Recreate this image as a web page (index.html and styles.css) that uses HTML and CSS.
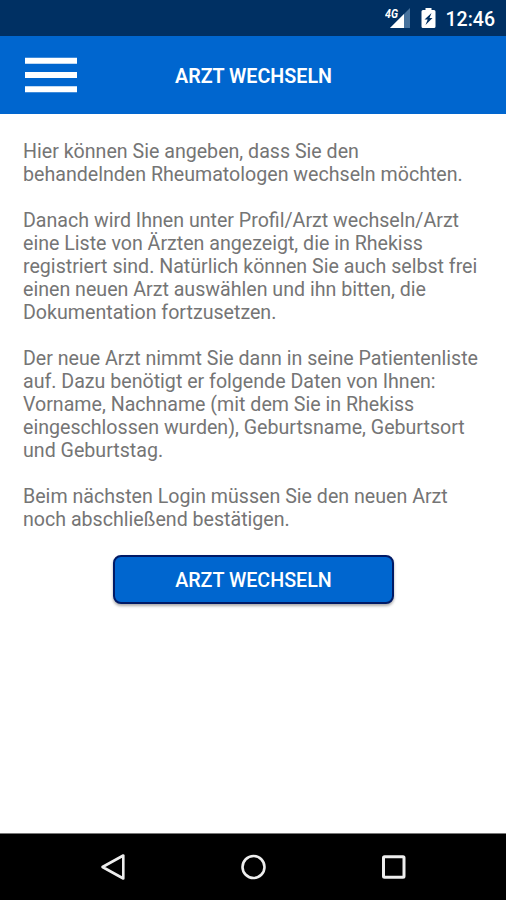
FILE: index.html
```html
<!DOCTYPE html>
<html lang="de">
<head>
<meta charset="utf-8">
<title>Arzt wechseln</title>
<link rel="stylesheet" href="styles.css">
</head>
<body>
<div class="status">
<svg class="signal" width="26" height="24" viewBox="0 0 26 24"><path d="M25 2V22H5z" fill="#47729d"/><path d="M19 8V22H5z" fill="#fff"/><text x="0" y="11.500" class="net" textLength="13" lengthAdjust="spacingAndGlyphs">4G</text></svg>
<svg class="battery" width="15" height="22" viewBox="0 0 15 22"><path d="M4.500 1h6v2h2.500q1.500 0 1.500 1.500v15q0 1.500-1.500 1.500H2q-1.500 0-1.500-1.500v-15Q.5 3 2 3h2.500z" fill="#fff"/><path d="M10.500 6L3.500 12.500h3.200L4.500 18L11.500 11H8.500z" fill="#003063"/></svg>
<span class="clock">12:46</span>
</div>
<header class="bar">
<svg class="menu" width="52" height="36" viewBox="0 0 52 36"><path d="M0 3.700H52M0 18H52M0 32.200H52" stroke="#fff" stroke-width="6"/></svg>
<h1>ARZT WECHSELN</h1>
</header>
<main>
<p>Hier können Sie angeben, dass Sie den<br>behandelnden Rheumatologen wechseln möchten.</p>
<p>Danach wird Ihnen unter Profil/Arzt wechseln/Arzt<br>eine Liste von Ärzten angezeigt, die in Rhekiss<br>registriert sind. Natürlich können Sie auch selbst frei<br>einen neuen Arzt auswählen und ihn bitten, die<br>Dokumentation fortzusetzen.</p>
<p>Der neue Arzt nimmt Sie dann in seine Patientenliste<br>auf. Dazu benötigt er folgende Daten von Ihnen:<br>Vorname, Nachname (mit dem Sie in Rhekiss<br>eingeschlossen wurden), Geburtsname, Geburtsort<br>und Geburtstag.</p>
<p>Beim nächsten Login müssen Sie den neuen Arzt<br>noch abschließend bestätigen.</p>
<button>ARZT WECHSELN</button>
</main>
<nav>
<svg width="28" height="28" viewBox="0 0 28 28"><path d="M24.300 2.500V25.500L3.500 14z"/></svg>
<svg width="28" height="28" viewBox="0 0 28 28"><circle cx="14.500" cy="14" r="11"/></svg>
<svg width="28" height="28" viewBox="0 0 28 28"><rect class="recent" x="4.500" y="3.700" width="20.500" height="20.500" rx="1"/></svg>
</nav>
</body>
</html>
```
FILE: styles.css
```css
* { box-sizing: border-box; }
body { margin: 0; width: 506px; height: 900px; display: flex; flex-direction: column; background: #fff; font-family: Roboto, sans-serif; overflow: hidden; }
.status { height: 36px; background: #003063; display: flex; align-items: center; justify-content: flex-end; padding-right: 11px; color: #fff; }
.signal { margin-right: 10px; }
.net { font: italic bold 12.500px Roboto, sans-serif; fill: #fff; stroke: #003063; stroke-width: 1.500px; paint-order: stroke; }
.battery { margin-right: 10px; }
.clock { font-size: 19.500px; font-weight: 500; line-height: 36px; padding-top: 3px; }
.bar { height: 78px; background: #0066cf; display: grid; grid-template-columns: 25px 52px 1fr 77px; align-items: center; }
.menu { grid-column: 2; }
h1 { margin: 2px 0 0 1px; font-size: 19.700px; font-weight: 600; color: #fff; text-align: center; white-space: nowrap; }
main { flex: 1; padding: 26px 23px 0; color: #757575; }
p { margin: 0 0 23px; font-size: 19.630px; line-height: 23px; white-space: nowrap; }
button { display: block; width: 281px; height: 49px; margin: 24px 0 0 90px; padding: 2px 0 0; border: 2px solid #001a66; border-radius: 8px; background: #0066cf; color: #fff; font: 500 19.700px Roboto, sans-serif; box-shadow: 0 2px 3px #0005; }
nav { height: 67px; background: #000; border-top: 1px solid #777; display: flex; justify-content: center; gap: 112px; align-items: center; }
nav svg { fill: none; stroke: #eee; stroke-width: 2.600; stroke-linejoin: round; }
nav .recent { stroke-width: 3; }
```
